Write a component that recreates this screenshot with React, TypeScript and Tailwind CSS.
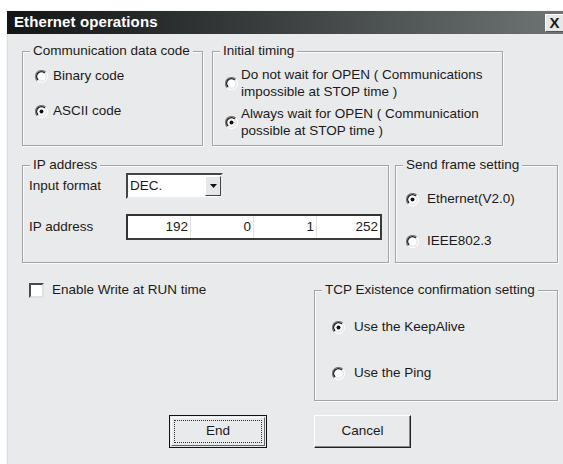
import React from 'react';

const Radio = ({ checked }: { checked?: boolean }) => (
  <svg width="13" height="13" viewBox="0 0 13 13" className="shrink-0">
    <circle cx="6.5" cy="6.5" r="6" fill="#fff" />
    <path d="M2.2 10.8 A6 6 0 0 1 10.8 2.2" stroke="#7d7d7d" strokeWidth="1.2" fill="none" />
    <path d="M3.1 9.9 A4.8 4.8 0 0 1 9.9 3.1" stroke="#1e1e1e" strokeWidth="1.4" fill="none" />
    <path d="M10.8 2.2 A6 6 0 0 1 2.2 10.8" stroke="#ffffff" strokeWidth="1" fill="none" />
    <path d="M9.9 3.1 A4.8 4.8 0 0 1 3.1 9.9" stroke="#d8d8d8" strokeWidth="1" fill="none" />
    {checked && <circle cx="6.5" cy="6.5" r="2" fill="#111" />}
  </svg>
);

const Group = ({
  label,
  className,
  children,
}: {
  label: string;
  className?: string;
  children?: React.ReactNode;
}) => (
  <div className={`relative shrink-0 border border-[#a2a4a6] shadow-[inset_1px_1px_0_#fbfbfb,1px_1px_0_#fbfbfb] ${className ?? ''}`}>
    <span className="absolute -top-[9px] left-[7px] bg-[#e9eaeb] px-[3px] leading-[16px] whitespace-nowrap">
      {label}
    </span>
    {children}
  </div>
);

const RadioRow = ({ checked, gap, children }: { checked?: boolean; gap: string; children: React.ReactNode }) => (
  <div className={`flex items-center h-[16px] whitespace-nowrap ${gap}`}>
    <Radio checked={checked} />
    <span>{children}</span>
  </div>
);

export default function App() {
  return (
    <div className="w-[563px] h-[464px] overflow-hidden bg-white pt-[10px] pl-[6px] font-['Liberation_Sans',Arial,sans-serif] text-[13.5px] text-[#1a1a1a]">
      <div className="w-[600px] h-full bg-[#e9eaeb] border-l border-t border-[#f7f7f7] shadow-[inset_1px_1px_0_#dcdcdc]">
        {/* title bar */}
        <div className="h-[23px] w-[557px] flex items-center justify-between pl-[7px] bg-gradient-to-r from-[#141616] via-[#3d4142] to-[#6f7575]">
          <span className="text-white font-bold text-[15px] tracking-[0.1px]">Ethernet operations</span>
          <div className="w-[19px] h-[18px] bg-[#e6e7e7] border border-t-white border-l-white border-r-[#555] border-b-[#555] flex items-center justify-center text-[15px] font-bold leading-none">
            X
          </div>
        </div>

        <div className="pl-[15px] pt-[17px]">
          {/* row 1 */}
          <div className="flex gap-[9px]">
            <Group label="Communication data code" className="w-[181px] h-[95px]">
              <div className="flex flex-col gap-[19px] pl-[12px] pt-[16px]">
                <RadioRow gap="gap-[5px]">Binary code</RadioRow>
                <RadioRow gap="gap-[5px]" checked>ASCII code</RadioRow>
              </div>
            </Group>
            <Group label="Initial timing" className="w-[291px] h-[95px]">
              <div className="flex flex-col gap-[5px] pl-[12px] pt-[14px] leading-[17px] whitespace-nowrap">
                <div className="flex items-center gap-[3px]">
                  <Radio />
                  <span>
                    Do not wait for OPEN ( Communications
                    <br />
                    impossible at STOP time )
                  </span>
                </div>
                <div className="flex items-center gap-[3px]">
                  <Radio checked />
                  <span>
                    Always wait for OPEN ( Communication
                    <br />
                    possible at STOP time )
                  </span>
                </div>
              </div>
            </Group>
          </div>

          {/* row 2 */}
          <div className="flex gap-[6px] mt-[19px]">
            <Group label="IP address" className="w-[367px] h-[98px]">
              <div className="flex flex-col pl-[6px] pt-[7px]">
                <div className="flex items-center">
                  <span className="w-[97px]">Input format</span>
                  <div className="w-[97px] h-[26px] bg-white border-2 border-t-[#444] border-l-[#444] border-r-[#ececec] border-b-[#ececec] flex items-center justify-between pl-[2px]">
                    <span>DEC.</span>
                    <div className="w-[16px] h-[20px] bg-[#e6e7e8] border border-t-white border-l-white border-r-[#444] border-b-[#444] flex items-center justify-center">
                      <svg width="7" height="4" viewBox="0 0 7 4">
                        <path d="M0 0h7L3.5 4z" fill="#111" />
                      </svg>
                    </div>
                  </div>
                </div>
                <div className="flex items-center mt-[15px]">
                  <span className="w-[97px]">IP address</span>
                  <div className="w-[256px] h-[26px] bg-white border-2 border-t-[#333] border-l-[#333] border-r-[#3a3a3a] border-b-[#3a3a3a] grid grid-cols-4">
                    {['192', '0', '1', '252'].map((v, i) => (
                      <div
                        key={v}
                        className={`flex items-center justify-end pr-[2px] ${i < 3 ? 'border-r border-[#e2e2e2]' : ''}`}
                      >
                        {v}
                      </div>
                    ))}
                  </div>
                </div>
              </div>
            </Group>
            <Group label="Send frame setting" className="w-[163px] h-[98px]">
              <div className="flex flex-col gap-[26px] pl-[10px] pt-[25px]">
                <RadioRow gap="gap-[8px]" checked>Ethernet(V2.0)</RadioRow>
                <RadioRow gap="gap-[8px]">IEEE802.3</RadioRow>
              </div>
            </Group>
          </div>

          {/* row 3 */}
          <div className="flex mt-[19px]">
            <div className="w-[292px] flex items-center gap-[8px] pl-[7px] h-[16px]">
              <div className="w-[15px] h-[15px] bg-white border-2 border-t-[#4a4a4a] border-l-[#4a4a4a] border-r-[#e0e0e0] border-b-[#e0e0e0]" />
              <span>Enable Write at RUN time</span>
            </div>
            <Group label="TCP Existence confirmation setting" className="w-[244px] h-[111px] mt-[8px]">
              <div className="flex flex-col gap-[30px] pl-[17px] pt-[28px]">
                <RadioRow gap="gap-[9px]" checked>Use the KeepAlive</RadioRow>
                <RadioRow gap="gap-[9px]">Use the Ping</RadioRow>
              </div>
            </Group>
          </div>

          {/* buttons */}
          <div className="flex gap-[47px] pl-[147px] mt-[14px]">
            <div className="w-[98px] h-[33px] border border-[#111] p-[1px]">
              <div className="h-full border border-t-white border-l-white border-r-[#666] border-b-[#666] p-[2px]">
                <div className="h-full border border-dotted border-[#333] flex items-center justify-center">End</div>
              </div>
            </div>
            <div className="w-[97px] h-[33px] border border-t-white border-l-white border-r-[#222] border-b-[#222] shadow-[inset_-1px_-1px_0_#888] flex items-center justify-center">
              Cancel
            </div>
          </div>
        </div>
      </div>
    </div>
  );
}
